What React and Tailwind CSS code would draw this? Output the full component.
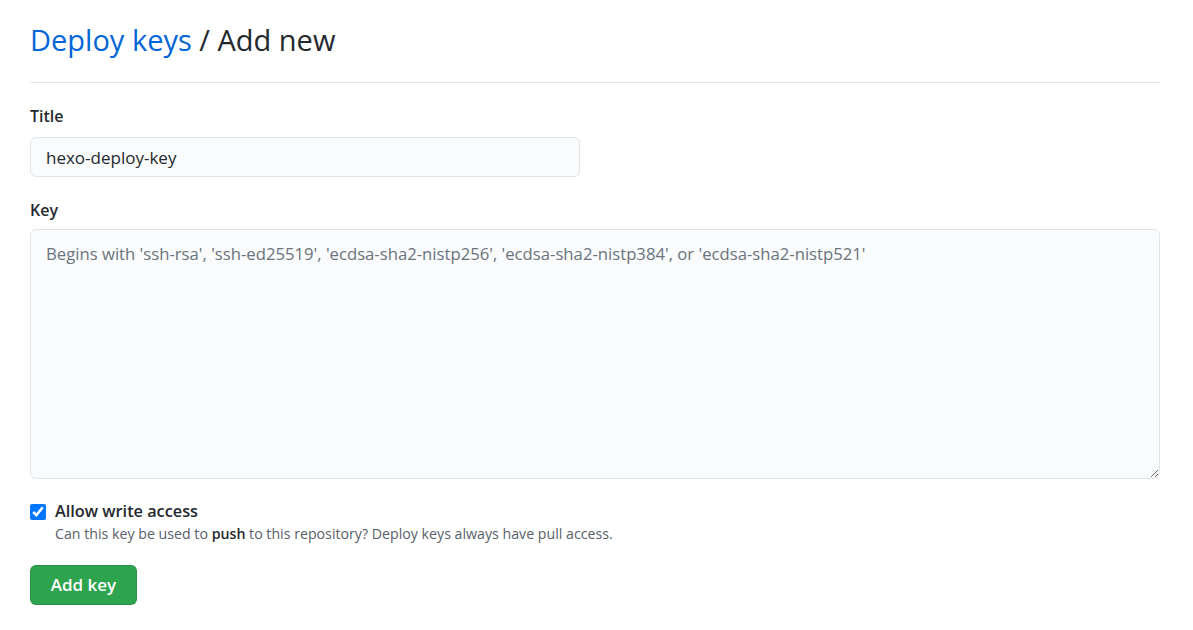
import React from 'react';

const font = { fontFamily: '"Segoe UI", "Open Sans", "Noto Sans", sans-serif' };

const App = () => {
  return (
    <div className="min-h-screen bg-white px-[30px] pt-[20px] text-[#24292e]" style={font}>
      {/* Subhead */}
      <div className="w-[1130px] border-b border-[#e1e4e8] pb-[22px]">
        <h2 className="text-[29px] leading-[40px] font-normal">
          <a href="#" className="text-[#0366d6]">Deploy keys</a>
          <span> / Add new</span>
        </h2>
      </div>

      <form className="mt-[19px]" onSubmit={(e) => e.preventDefault()}>
        <div>
          <label className="block text-[16px] leading-[28px] font-semibold">Title</label>
          <input
            type="text"
            defaultValue="hexo-deploy-key"
            className="mt-[7px] h-[40px] w-[550px] rounded-[6px] border border-[#e1e4e8] bg-[#fafbfc] px-[15px] text-[17px] text-[#24292e] outline-none"
          />
        </div>

        <div className="mt-[19px]">
          <label className="block text-[16px] leading-[28px] font-semibold">Key</label>
          <textarea
            placeholder="Begins with 'ssh-rsa', 'ssh-ed25519', 'ecdsa-sha2-nistp256', 'ecdsa-sha2-nistp384', or 'ecdsa-sha2-nistp521'"
            className="mt-[5px] block h-[250px] w-[1130px] rounded-[6px] border border-[#e1e4e8] bg-[#fafbfc] px-[15px] py-[12px] text-[16.7px] leading-[24px] outline-none placeholder:text-[#6a737d]"
          />
        </div>

        <div className="mt-[21px] flex items-start gap-[9px]">
          <input type="checkbox" defaultChecked className="mt-[4px] h-[16px] w-[16px] accent-[#0075ff]" />
          <div>
            <div className="text-[16.3px] leading-[22px] font-semibold">Allow write access</div>
            <p className="mt-[2px] text-[14.2px] leading-[20px] text-[#586069]">
              Can this key be used to <strong className="font-semibold text-[#24292e]">push</strong> to this repository? Deploy keys always have pull access.
            </p>
          </div>
        </div>

        <button
          type="submit"
          className="mt-[21px] h-[40px] w-[107px] rounded-[6px] border border-[rgba(27,31,35,0.15)] bg-[#2ea44f] text-[17px] font-semibold text-white"
        >
          Add key
        </button>
      </form>
    </div>
  );
};

export default App;
